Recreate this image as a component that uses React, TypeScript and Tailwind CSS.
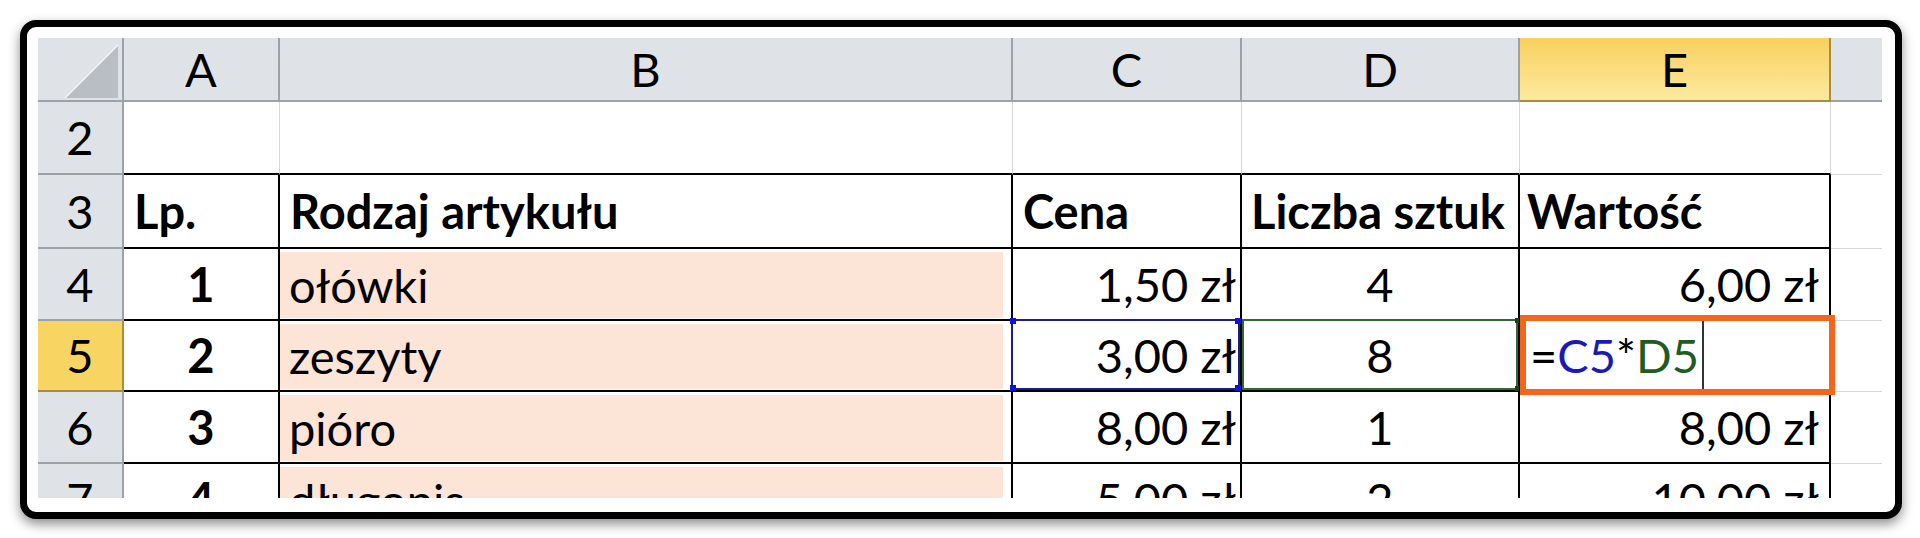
import React from 'react';

const items = [
  { n: '4', a: '1', b: 'ołówki', c: '1,50 zł', d: '4', e: '6,00 zł' },
  { n: '5', a: '2', b: 'zeszyty', c: '3,00 zł', d: '8', e: '', active: true },
  { n: '6', a: '3', b: 'pióro', c: '8,00 zł', d: '1', e: '8,00 zł' },
  { n: '7', a: '4', b: 'długopis', c: '5,00 zł', d: '2', e: '10,00 zł' },
];

function Corner({ at }: { at: string }) {
  return <span className={`absolute w-[6px] h-[6px] bg-[#1010e0] ${at}`} />;
}

export default function App() {
  return (
    <div className="min-h-[538px] bg-white pt-[20px] pl-[20px] [font-family:Lato,'Liberation_Sans',sans-serif] text-black">
      <div className="w-[1882px] h-[499px] rounded-[16px] border-[7px] border-black bg-white pt-[11px] pl-[11px] shadow-[0_5px_12px_rgba(0,0,0,0.45)]">
        <div className="h-[460px] w-[1844px] overflow-hidden grid grid-cols-[86px_156px_733px_229px_278px_311px_51px] grid-rows-[64px_73px_74px_72px_71px_72px_72px] text-[47px] leading-none">
          {/* column headers */}
          <div className="relative bg-[#dfe3e8] border-r-2 border-b-2 border-[#9ca2aa]">
            <svg className="absolute left-0 top-0" width="84" height="62" viewBox="0 0 84 62">
              <polygon points="27,60 80,7 80,60" fill="#b9bec5" />
              <line x1="27" y1="60" x2="80" y2="7" stroke="#f4f5f7" strokeWidth="1.5" />
            </svg>
          </div>
          {['A', 'B', 'C', 'D'].map(l => (
            <div key={l} className="flex items-center justify-center bg-[#dfe3e8] border-r-2 border-b-2 border-[#9ca2aa]">
              {l}
            </div>
          ))}
          <div className="flex items-center justify-center bg-linear-to-b from-[#f8d05e] to-[#fde99d] border-r-2 border-b-2 border-[#a88d3f]">
            E
          </div>
          <div className="bg-[#dfe3e8] border-b-2 border-[#9ca2aa]" />

          {/* row 2 */}
          <div className="flex items-center justify-center bg-[#dfe3e8] border-r-2 border-b-2 border-[#9ca2aa]">2</div>
          <div className="border-r border-b-2 border-r-[#d6d6d6] border-b-black" />
          <div className="border-r border-b-2 border-r-[#d6d6d6] border-b-black" />
          <div className="border-r border-b-2 border-r-[#d6d6d6] border-b-black" />
          <div className="border-r border-b-2 border-r-[#d6d6d6] border-b-black" />
          <div className="border-r border-b-2 border-r-[#d6d6d6] border-b-black" />
          <div className="border-b border-[#d6d6d6]" />

          {/* row 3 */}
          <div className="flex items-center justify-center bg-[#dfe3e8] border-r-2 border-b-2 border-[#9ca2aa]">3</div>
          <div className="flex items-center pl-[10px] font-bold border-r-2 border-b-2 border-black">Lp.</div>
          <div className="flex items-center pl-[10px] font-bold border-r-2 border-b-2 border-black">Rodzaj artykułu</div>
          <div className="flex items-center pl-[10px] font-bold border-r-2 border-b-2 border-black">Cena</div>
          <div className="flex items-center pl-[9px] font-bold border-r-2 border-b-2 border-black whitespace-nowrap">Liczba sztuk</div>
          <div className="flex items-center pl-[7px] font-bold border-r-2 border-b-2 border-black">Wartość</div>
          <div className="border-b border-[#d6d6d6]" />

          {items.map(r => (
            <React.Fragment key={r.n}>
              {r.active ? (
                <div className="flex items-center justify-center bg-[#f8d462] border-r-2 border-b-2 border-[#a88d3f]">{r.n}</div>
              ) : (
                <div className="flex items-center justify-center bg-[#dfe3e8] border-r-2 border-b-2 border-[#9ca2aa]">{r.n}</div>
              )}
              <div className="flex items-center justify-center font-bold border-r-2 border-b-2 border-black">{r.a}</div>
              <div className="border-r-2 border-b-2 border-black pt-[3px] pr-[8px] pb-[1px]">
                <div className="h-full flex items-center pl-[9px] bg-[#fce4d6]">{r.b}</div>
              </div>
              <div className="relative flex items-center justify-end pr-[4px] border-r-2 border-b-2 border-black">
                {r.c}
                {r.active && (
                  <div className="absolute -top-[2px] -left-[2px] right-0 bottom-0 border-2 border-[#1c1c8a]">
                    <Corner at="-left-[3px] -top-[3px]" />
                    <Corner at="-right-[3px] -top-[3px]" />
                    <Corner at="-left-[3px] -bottom-[3px]" />
                    <Corner at="-right-[3px] -bottom-[3px]" />
                  </div>
                )}
              </div>
              <div className="relative flex items-center justify-center border-r-2 border-b-2 border-black">
                {r.d}
                {r.active && (
                  <div className="absolute -top-[2px] left-0 right-0 bottom-0 border-2 border-[#2f6a2f]">
                    <span className="absolute -right-[3px] -top-[3px] w-[4px] h-[5px] bg-[#1d3d1d]" />
                    <span className="absolute -right-[3px] -bottom-[3px] w-[4px] h-[5px] bg-[#1d3d1d]" />
                  </div>
                )}
              </div>
              <div className="relative flex items-center justify-end pr-[10px] border-r-2 border-b-2 border-black">
                {r.active ? (
                  <>
                    <div className="absolute left-[10px] top-0 bottom-0 flex">
                      <span className="flex items-center">
                        =<span className="text-[#1a1ab8]">C5</span>*<span className="text-[#1f5c1f]">D5</span>
                      </span>
                      <span className="ml-[3px] w-[2px] bg-[#333]" />
                    </div>
                    <div className="absolute z-10 -top-[6px] left-0 -right-[6px] -bottom-[5px] border-[6px] border-[#f4661b]" />
                  </>
                ) : (
                  r.e
                )}
              </div>
              <div className="border-b border-[#d6d6d6]" />
            </React.Fragment>
          ))}
        </div>
      </div>
    </div>
  );
}
